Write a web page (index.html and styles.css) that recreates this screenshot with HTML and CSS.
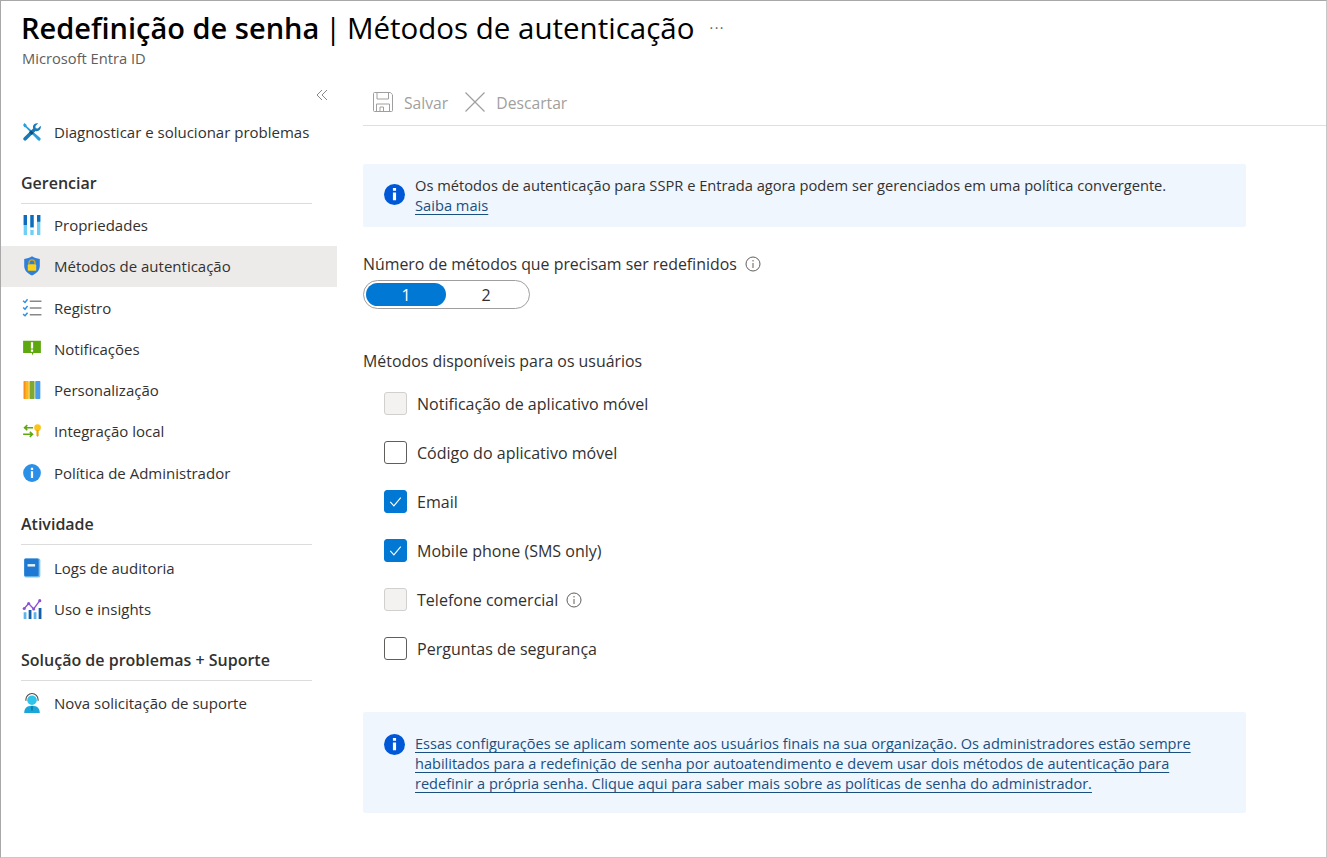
FILE: index.html
```html
<!DOCTYPE html>
<html lang="pt">
<head>
  <meta charset="utf-8">
  <title>Redefinição de senha | Métodos de autenticação</title>
  <link rel="stylesheet" href="styles.css">
</head>
<body>
  <div class="frame">
    <header class="page-head">
      <div class="title-row">
        <h1 class="title"><strong>Redefinição de senha</strong> <span class="title-bar">|</span> Métodos de autenticação</h1>
        <span class="title-more">···</span>
      </div>
      <div class="subtitle">Microsoft Entra ID</div>
    </header>

    <div class="columns">
      <nav class="side">
        <div class="collapse">
          <svg width="12" height="12" viewBox="0 0 12 12" fill="none" stroke="#8a8886" stroke-width="1"><path d="M6 1 1 6l5 5M11 1 6 6l5 5"/></svg>
        </div>

        <a class="nav-item nav-first">
          <svg class="nav-icon" viewBox="0 0 18 18"><path d="M2.200 1 4 2.400l.3 1.400 11.900 10.400c.8.700.8 1.500.1 2.200s-1.500.6-2.100-.1L3.400 4.900 2 4.600 1 2.600z" fill="#2b9fdc"/><path d="M16.800 3.400 14.300 5.800l-2-.2-.2-2L14.600 1.200c-2-.6-4.300.6-4.700 2.700-.1.700-.1 1.300.1 1.900L1.700 13.900c-.8.800-.8 1.700-.1 2.400s1.600.7 2.400 0l8.200-8.200c.6.200 1.300.2 1.900.1 2.100-.4 3.300-2.800 2.700-4.800z" fill="#1a7ab8"/><path d="M8 7.500 10.500 10 8.800 11.700 6.300 9.200z" fill="#0f4f7a"/></svg>
          <span>Diagnosticar e solucionar problemas</span>
        </a>

        <h2 class="nav-head">Gerenciar</h2>
        <a class="nav-item">
          <svg class="nav-icon" viewBox="0 0 18 18"><path d="M1.500 0h3v18h-3zM7.500 0h3v18h-3zM13.500 0h3v18h-3z" fill="#6fd0f5"/><path d="M1.500 0h3v9h-3zM7.500 0h3v11h-3zM13.500 0h3v6h-3z" fill="#0f6cbd"/><path d="M7.500 11.500h3v2h-3z" fill="#fff"/></svg>
          <span>Propriedades</span>
        </a>
        <a class="nav-item is-active">
          <svg class="nav-icon" viewBox="0 0 18 18"><path d="M9 .3c2 1.500 4.300 2.200 7 2.300v6.400c0 3.900-3 6.900-7 8.500-4-1.600-7-4.600-7-8.500V2.600C4.700 2.500 7 1.800 9 .3z" fill="#2f7fdb"/><path d="M6.300 7.500V6.200a2.700 2.700 0 0 1 5.400 0v1.300" fill="none" stroke="#d8a514" stroke-width="1.200"/><rect x="5.200" y="7.500" width="7.600" height="5.800" rx=".8" fill="#fcd116"/></svg>
          <span>Métodos de autenticação</span>
        </a>
        <a class="nav-item">
          <svg class="nav-icon" viewBox="0 0 18 18" fill="none"><path d="M1 2.500 2.700 4 5 1.200M1 8.500 2.700 10 5 7.200M1 14.500 2.700 16 5 13.200" stroke="#2f8fe0" stroke-width="1.300"/><path d="M7 3h10.500M7 9h10.500M7 15h10.500" stroke="#8a8886" stroke-width="1.300"/></svg>
          <span>Registro</span>
        </a>
        <a class="nav-item">
          <svg class="nav-icon" viewBox="0 0 18 18"><path d="M1 1.500h16v11h-6.500l-1.500 2.300v-2.300H1z" fill="#5ea80f"/><path d="M8 3h2v5.500H8zM8 9.500h2v2H8z" fill="#fff"/></svg>
          <span>Notificações</span>
        </a>
        <a class="nav-item">
          <svg class="nav-icon" viewBox="0 0 18 18"><rect x="1.500" y="1" width="4.600" height="16" rx=".6" fill="#fbb81c"/><rect x="6.700" y="1" width="4.600" height="16" rx=".6" fill="#7fa832"/><rect x="11.900" y="1" width="4.600" height="16" rx=".6" fill="#4a9ce8"/><rect x="1.500" y="1" width="1.600" height="16" fill="#f78d1e"/></svg>
          <span>Personalização</span>
        </a>
        <a class="nav-item">
          <svg class="nav-icon" viewBox="0 0 18 18" fill="none"><path d="M10 6H2.500M4.800 3.700 2.300 6l2.500 2.300" stroke="#5ea80f" stroke-width="1.400"/><path d="M1 12h8M7 9.700 9.500 12 7 14.300" stroke="#5ea80f" stroke-width="1.400"/><circle cx="14" cy="6" r="3" fill="#fcc419"/><path d="M13 8h2v5l-1 1.500-1-1.500z" fill="#e8a80c"/></svg>
          <span>Integração local</span>
        </a>
        <a class="nav-item">
          <svg class="nav-icon" viewBox="0 0 18 18"><circle cx="9" cy="9" r="8" fill="#2a8fe6"/><path d="M8 7.500h2V13.500H8zM8 4.300h2V6.300H8z" fill="#fff"/></svg>
          <span>Política de Administrador</span>
        </a>

        <h2 class="nav-head nav-head-activity">Atividade</h2>
        <a class="nav-item">
          <svg class="nav-icon" viewBox="0 0 18 18"><rect x="2" y=".5" width="14.500" height="17" rx="1.500" fill="#7fc4ee"/><rect x="2" y=".5" width="13" height="16" rx="1.200" fill="#1f78d1"/><rect x="5" y="5.500" width="6.800" height="2.200" fill="#e6f2fb"/></svg>
          <span>Logs de auditoria</span>
        </a>
        <a class="nav-item">
          <svg class="nav-icon" viewBox="0 0 18 18"><path d="M1.500 12h2.500v6H1.500zM10.500 12H13v6h-2.500z" fill="#5bb4ec"/><path d="M6 10h2.500v8H6zM15 8h2.500v10H15z" fill="#125ea8"/><path d="M2 8.500 6 4l4.500 5L16 1.500" fill="none" stroke="#8c4fd6" stroke-width="1.200"/><circle cx="6" cy="4" r="1.400" fill="#8c4fd6"/><circle cx="16" cy="1.500" r="1.400" fill="#8c4fd6"/><circle cx="2" cy="8.500" r="1.400" fill="#8c4fd6"/><circle cx="10.500" cy="9" r="1.400" fill="#8c4fd6"/></svg>
          <span>Uso e insights</span>
        </a>

        <h2 class="nav-head nav-head-support">Solução de problemas + Suporte</h2>
        <a class="nav-item">
          <svg class="nav-icon" viewBox="0 0 18 18"><path d="M2 18c0-4 2-6.500 7-6.500s7 2.500 7 6.500z" fill="#1aa6d8"/><circle cx="9" cy="6.500" r="4.300" fill="#2fc4ea"/><path d="M3.500 7V6a5.500 5.500 0 0 1 11 0v1" fill="none" stroke="#4a4a4a" stroke-width="1"/><path d="M8 12h2l-.4 4h-1.200z" fill="#0f7fa8"/></svg>
          <span>Nova solicitação de suporte</span>
        </a>
      </nav>

      <main class="content">
        <div class="toolbar">
          <button class="tool-btn">
            <svg width="20" height="20" viewBox="0 0 20 20" fill="none" stroke="#a19f9d" stroke-width="1"><path d="M.5 1.500a1 1 0 0 1 1-1h15.800l2.200 2.200v15.800a1 1 0 0 1-1 1h-17a1 1 0 0 1-1-1z"/><path d="M4 .5v6.500h11.500V.5M3.500 19.500V12h13v7.500M7 19.500V15h3.500v4.500"/></svg>
            <span>Salvar</span>
          </button>
          <button class="tool-btn">
            <svg width="20" height="20" viewBox="0 0 20 20" fill="none" stroke="#a19f9d" stroke-width="1.200"><path d="M.5.500l19 19M19.500.500l-19 19"/></svg>
            <span>Descartar</span>
          </button>
        </div>

        <div class="banner banner-top">
          <svg class="banner-icon" viewBox="0 0 20 20"><circle cx="10" cy="10" r="10" fill="#0058d6"/><path d="M8.500 8h3v7.500h-3zM8.500 3.800h3V6.500h-3z" fill="#fff"/></svg>
          <p>Os métodos de autenticação para SSPR e Entrada agora podem ser gerenciados em uma política convergente.<br><a class="link">Saiba mais</a></p>
        </div>

        <div class="field-label">
          <span>Número de métodos que precisam ser redefinidos</span>
          <svg class="hint" viewBox="0 0 16 16" fill="none" stroke="#605e5c"><circle cx="8" cy="8" r="7"/><path d="M8 7v5M8 4v1.500"/></svg>
        </div>
        <div class="toggle">
          <span class="toggle-opt is-on">1</span>
          <span class="toggle-opt">2</span>
        </div>

        <div class="methods-label">Métodos disponíveis para os usuários</div>
        <ul class="methods">
          <li class="method"><span class="box is-disabled"></span>Notificação de aplicativo móvel</li>
          <li class="method"><span class="box"></span>Código do aplicativo móvel</li>
          <li class="method"><span class="box is-checked"><svg viewBox="0 0 22 22" fill="none" stroke="#fff" stroke-width="1.200"><path d="M5.500 11.500 9.300 15.500 16.500 7"/></svg></span>Email</li>
          <li class="method"><span class="box is-checked"><svg viewBox="0 0 22 22" fill="none" stroke="#fff" stroke-width="1.200"><path d="M5.500 11.500 9.300 15.500 16.500 7"/></svg></span>Mobile phone (SMS only)</li>
          <li class="method"><span class="box is-disabled"></span>Telefone comercial<svg class="hint" viewBox="0 0 16 16" fill="none" stroke="#605e5c"><circle cx="8" cy="8" r="7"/><path d="M8 7v5M8 4v1.500"/></svg></li>
          <li class="method"><span class="box"></span>Perguntas de segurança</li>
        </ul>

        <div class="banner banner-bottom">
          <svg class="banner-icon" viewBox="0 0 20 20"><circle cx="10" cy="10" r="10" fill="#0058d6"/><path d="M8.500 8h3v7.500h-3zM8.500 3.800h3V6.500h-3z" fill="#fff"/></svg>
          <p><a class="link">Essas configurações se aplicam somente aos usuários finais na sua organização. Os administradores estão sempre<br>habilitados para a redefinição de senha por autoatendimento e devem usar dois métodos de autenticação para<br>redefinir a própria senha. Clique aqui para saber mais sobre as políticas de senha do administrador.</a></p>
        </div>
      </main>
    </div>
  </div>
</body>
</html>
```

FILE: styles.css
```css
* {
  box-sizing: border-box;
}
html, body {
  height: 100%;
}
body {
  margin: 0;
  background-color: #fff;
  color: #323130;
  font-family: "Open Sans", "Noto Sans", sans-serif;
  font-size: 16px;
  overflow: hidden;
}
.frame {
  height: 858px;
  border: 1px solid #a8a8a8;
  border-right-color: #c8c8c8;
  border-bottom-color: #c8c8c8;
}

/* cabecalho */
.page-head {
  height: 82px;
  padding: 7px 0 0 20px;
}
.title-row {
  display: flex;
  align-items: center;
  gap: 15px;
  height: 38px;
}
.title {
  margin: 0;
  color: #000;
  font-size: 29.500px;
  font-weight: 400;
  white-space: nowrap;
}
.title strong {
  font-size: 29px;
  font-weight: 600;
}
.title-bar {
  margin: 0 -2px;
}
.title-more {
  color: #605e5c;
  font-size: 14px;
  letter-spacing: 1.500px;
}
.subtitle {
  margin: 2px 0 0 1px;
  color: #605e5c;
  font-size: 14.700px;
}

.columns {
  display: flex;
}

/* menu lateral */
.side {
  flex: 0 0 336px;
}
.collapse {
  display: flex;
  justify-content: flex-end;
  height: 24px;
  padding: 6px 9px 0 0;
}
.nav-item {
  display: flex;
  align-items: center;
  gap: 12px;
  height: 41.300px;
  padding-left: 21px;
  font-size: 15px;
  white-space: nowrap;
}
.nav-item.is-active {
  background-color: #edebe9;
}
.nav-first {
  margin-top: 4px;
}
.nav-icon {
  flex: none;
  width: 20px;
  height: 20px;
}
.nav-head {
  height: 32px;
  margin: 20px 25px 0 20px;
  border-bottom: 1px solid #dcdcdc;
  font-size: 16px;
  font-weight: 600;
  white-space: nowrap;
}
.nav-head-activity {
  margin-bottom: 2px;
}
.nav-head-support {
  margin-top: 19px;
  margin-bottom: 1px;
}

/* conteudo */
.content {
  flex: 1;
  min-width: 0;
  padding-left: 26px;
}
.toolbar {
  display: flex;
  gap: 17px;
  height: 44px;
  margin-top: -1px;
  padding: 9px 0 0 10px;
  border-bottom: 1px solid #e1dfdd;
}
.tool-btn {
  display: flex;
  align-items: center;
  gap: 11px;
  height: 22px;
  padding: 0;
  border: none;
  background: none;
  color: #a19f9d;
  font: inherit;
  font-size: 15.700px;
}
.tool-btn span {
  padding-top: 2px;
}
.banner {
  display: flex;
  width: 883px;
  padding: 11px 0 0 21px;
  border-radius: 2px;
  background-color: #eff6fe;
}
.banner p {
  margin: 0;
  line-height: 20px;
}
.banner-icon {
  flex: none;
  width: 21px;
  height: 21px;
  margin: 9px 10px 0 0;
}
.banner-top {
  height: 63px;
  margin-top: 38px;
  font-size: 14.680px;
}
.banner-bottom {
  height: 101px;
  margin-top: 39px;
  padding-top: 21px;
  font-size: 14.560px;
}
.banner-bottom .banner-icon {
  margin-top: 1px;
}
.link {
  color: #1a4f80;
  text-decoration: underline;
  text-underline-offset: 3px;
}
.field-label {
  display: flex;
  align-items: center;
  gap: 8px;
  height: 22px;
  margin-top: 26px;
  font-size: 15.900px;
}
.hint {
  flex: none;
  width: 16px;
  height: 16px;
}
.toggle {
  display: flex;
  width: 167px;
  height: 29px;
  margin-top: 5px;
  padding: 2px;
  border: 1px solid #a19f9d;
  border-radius: 15px;
}
.toggle-opt {
  display: flex;
  align-items: center;
  justify-content: center;
  flex: 0 0 80px;
  border-radius: 12px;
}
.toggle-opt.is-on {
  background-color: #0078d4;
  color: #fff;
}
.methods-label {
  height: 22px;
  margin-top: 41px;
  font-size: 15.900px;
}
.methods {
  list-style: none;
  margin: 7px 0 0;
  padding: 0 0 0 21px;
  font-size: 16.050px;
}
.method {
  display: flex;
  align-items: center;
  gap: 10px;
  height: 49px;
  white-space: nowrap;
}
.method .hint {
  margin-left: -2px;
}
.box {
  flex: none;
  display: block;
  width: 23px;
  height: 23px;
  border: 1px solid #605e5c;
  border-radius: 3px;
  background-color: #fff;
}
.box.is-disabled {
  border-color: #d2d0ce;
  background-color: #f3f2f1;
}
.box.is-checked {
  border-color: #0078d4;
  background-color: #0078d4;
}
.box svg {
  display: block;
  width: 21px;
  height: 21px;
}
```
